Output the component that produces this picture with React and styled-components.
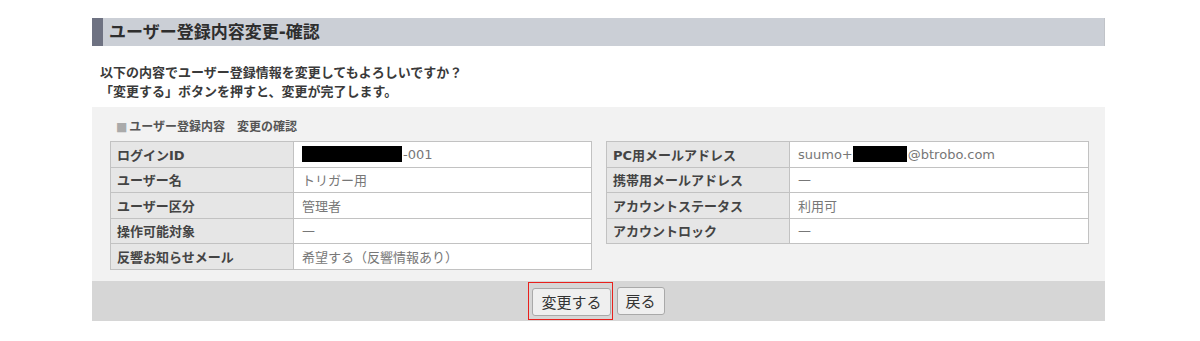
import React from "react";
import styled, { createGlobalStyle } from "styled-components";

const GlobalStyle = createGlobalStyle`
  body {
    margin: 0;
    background: #fff;
    font-family: "DejaVu Sans", "Noto Sans CJK JP", sans-serif;
    color: #333;
  }
`;

const leftRows = [
  { label: "ログインID", value: "-001", masked: 100 },
  { label: "ユーザー名", value: "トリガー用" },
  { label: "ユーザー区分", value: "管理者" },
  { label: "操作可能対象", value: "—" },
  { label: "反響お知らせメール", value: "希望する（反響情報あり）" },
];

const rightRows = [
  { label: "PC用メールアドレス", prefix: "suumo+", value: "@btrobo.com", masked: 54 },
  { label: "携帯用メールアドレス", value: "—" },
  { label: "アカウントステータス", value: "利用可" },
  { label: "アカウントロック", value: "—" },
];

export default function App() {
  return (
    <>
      <GlobalStyle />
      <Page>
        <TitleBar>ユーザー登録内容変更-確認</TitleBar>
        <Intro>
          以下の内容でユーザー登録情報を変更してもよろしいですか？
          <br />
          「変更する」ボタンを押すと、変更が完了します。
        </Intro>
        <Panel>
          <PanelBody>
            <SectionLabel>
              <Square>■</Square>ユーザー登録内容　変更の確認
            </SectionLabel>
            <Columns>
              <InfoTable rows={leftRows} />
              <InfoTable rows={rightRows} />
            </Columns>
          </PanelBody>
          <ButtonBar>
            <Highlight>
              <Button>変更する</Button>
            </Highlight>
            <Button>戻る</Button>
          </ButtonBar>
        </Panel>
      </Page>
    </>
  );
}

function InfoTable({ rows }) {
  return (
    <Table>
      <tbody>
        {rows.map((r) => (
          <tr key={r.label}>
            <Th>{r.label}</Th>
            <Td>
              {r.prefix}
              {r.masked && <Mask $w={r.masked} />}
              {r.value}
            </Td>
          </tr>
        ))}
      </tbody>
    </Table>
  );
}

const Page = styled.div`
  width: 1013px;
  margin-left: 92px;
  padding-top: 18px;
`;

const TitleBar = styled.h1`
  margin: 0;
  height: 28px;
  line-height: 28px;
  background: #cbcfd6;
  border-left: 11px solid #6e7282;
  border-right: 1px solid #c0c3c8;
  padding-left: 6px;
  font-size: 17px;
  font-weight: bold;
  color: #2e2e2e;
  box-sizing: border-box;
`;

const Intro = styled.p`
  margin: 17px 0 6px 8px;
  font-size: 13px;
  line-height: 19px;
  font-weight: bold;
  color: #3a3a3a;
`;

const Panel = styled.div`
  background: #f2f2f2;
`;

const PanelBody = styled.div`
  padding: 12px 16px 11px 18px;
`;

const SectionLabel = styled.div`
  font-size: 12px;
  line-height: 16px;
  font-weight: bold;
  color: #555;
  padding-left: 6px;
  margin-bottom: 6px;
`;

const Square = styled.span`
  color: #aaa;
  margin-right: 2px;
`;

const Columns = styled.div`
  display: grid;
  grid-template-columns: 482px 483px;
  column-gap: 14px;
  align-items: start;
`;

const Table = styled.table`
  width: 100%;
  border-collapse: collapse;
  font-size: 13px;
`;

const Th = styled.th`
  width: 176px;
  height: 24.5px;
  padding: 0 0 0 6px;
  background: #e6e6e6;
  border: 1px solid #c2c2c2;
  text-align: left;
  font-weight: bold;
  color: #444;
  white-space: nowrap;
`;

const Td = styled.td`
  height: 24.5px;
  padding: 0 0 0 8px;
  background: #fff;
  border: 1px solid #c2c2c2;
  color: #777;
  white-space: nowrap;
`;

const Mask = styled.span`
  display: inline-block;
  width: ${(p) => p.$w}px;
  height: 16px;
  background: #000;
  vertical-align: -3px;
  margin-right: 1px;
`;

const ButtonBar = styled.div`
  background: #d6d6d6;
  height: 40px;
  display: flex;
  align-items: center;
  justify-content: center;
  gap: 4px;
  padding-right: 4px;
`;

const Highlight = styled.span`
  display: inline-flex;
  border: 1px solid #e8211d;
  padding: 5px 1px 3px 3px;
`;

const Button = styled.button`
  height: 28px;
  padding: 0 8px;
  font-family: "DejaVu Sans", "Noto Sans CJK JP", sans-serif;
  font-size: 15px;
  color: #333;
  background: #efefef;
  border: 1px solid #a9a9a9;
  border-radius: 3px;
  cursor: pointer;
`;
